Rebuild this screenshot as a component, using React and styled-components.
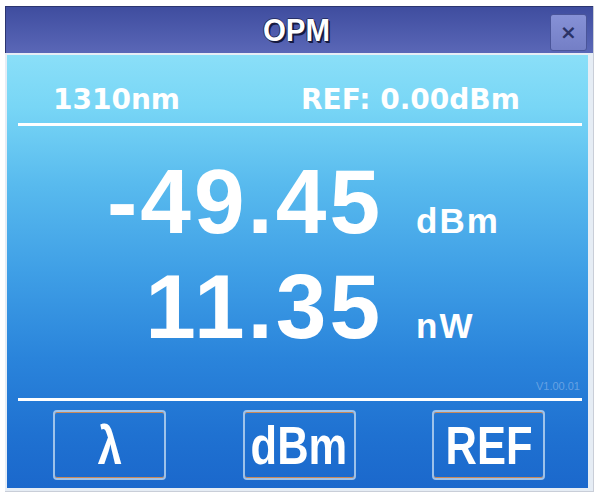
import React from 'react';
import styled, { createGlobalStyle } from 'styled-components';

const Global = createGlobalStyle`
  html, body { margin: 0; padding: 0; background: #ffffff; }
  body { font-family: "Liberation Sans", Arial, sans-serif; }
`;

const Window = styled.div`
  margin: 6px 0 0 5px;
  width: 589px;
  height: 486px;
  box-sizing: border-box;
  display: flex;
  flex-direction: column;
  background: #e6edf5;
  border-right: 1px solid #c9ced8;
  border-bottom: 1px solid #c9ced8;
`;

const TitleBar = styled.div`
  height: 47px;
  box-sizing: border-box;
  display: grid;
  grid-template-columns: 1fr auto 1fr;
  align-items: center;
  padding: 0 6px 0 0;
  background: linear-gradient(#3f4d9f, #5a67b7);
  border-top: 1px solid #2c3570;
  border-left: 1px solid #2c3570;
`;

const Title = styled.div`
  grid-column: 2;
  color: #ffffff;
  font-family: "Liberation Sans", Arial, sans-serif;
  font-weight: bold;
  font-size: 32px;
  line-height: 1;
  transform: scaleX(0.92);
  text-shadow: 1px 1px 0 #151a40, 2px 2px 0 #151a40, -1px 0 0 rgba(20, 25, 60, 0.7),
    0 -1px 0 rgba(20, 25, 60, 0.6);
`;

const CloseButton = styled.div`
  justify-self: end;
  width: 37px;
  height: 37px;
  box-sizing: border-box;
  margin-top: 4px;
  display: flex;
  align-items: center;
  justify-content: center;
  background: linear-gradient(#8691d6, #747fc6);
  border: 1px solid #4a5599;
  border-radius: 3px;
  color: #2b3366;
  font-family: "DejaVu Sans", sans-serif;
  font-weight: bold;
  font-size: 20px;
`;

const Body = styled.div`
  flex: 1;
  margin: 2px 5px 3px 2px;
  padding: 0 6px 0 11px;
  display: flex;
  flex-direction: column;
  background: linear-gradient(
    180deg,
    #8adff8 0%,
    #78d6f6 12%,
    #58baee 30%,
    #3f9fe6 50%,
    #2a84db 70%,
    #1f71d1 88%,
    #1b68cc 100%
  );
`;

const TopRow = styled.div`
  height: 68px;
  box-sizing: border-box;
  display: flex;
  align-items: flex-end;
  padding: 0 0 9px 35px;
`;

const StatusText = styled.span`
  flex: ${(p) => (p.$grow ? '0 0 248px' : '0 0 auto')};
  color: #ffffff;
  font-family: "DejaVu Sans", sans-serif;
  font-weight: bold;
  font-size: 28px;
  line-height: 1;
`;

const Rule = styled.div`
  height: 3px;
  background: #ffffff;
  flex: 0 0 auto;
`;

const Readings = styled.div`
  margin-top: 23px;
  display: grid;
  grid-template-columns: 365px auto;
  column-gap: 33px;
  grid-auto-rows: 105px;
  align-items: baseline;
`;

const Value = styled.span`
  text-align: right;
  color: #ffffff;
  font-family: "Liberation Sans", Arial, sans-serif;
  font-weight: bold;
  font-size: 91px;
  line-height: 105px;
  letter-spacing: 3px;
`;

const Unit = styled.span`
  color: #ffffff;
  font-family: "Liberation Sans", Arial, sans-serif;
  font-weight: bold;
  font-size: 35px;
  letter-spacing: 2px;
`;

const Version = styled.div`
  flex: 1;
  display: flex;
  align-items: flex-end;
  justify-content: flex-end;
  padding: 0 2px 6px 0;
  color: rgba(200, 218, 245, 0.4);
  font-family: "Liberation Sans", Arial, sans-serif;
  font-size: 11px;
`;

const ButtonRow = styled.div`
  display: flex;
  justify-content: space-between;
  padding: 9px 37px 8px 35px;
`;

const SoftKey = styled.div`
  width: 113px;
  height: 70px;
  box-sizing: border-box;
  display: flex;
  align-items: center;
  justify-content: center;
  border: 2px solid rgba(190, 215, 240, 0.8);
  border-radius: 4px;
  box-shadow: inset 0 1px 0 #c98a5a, inset 0 -1px 0 #c98a5a;
`;

const KeyLabel = styled.span`
  display: inline-block;
  color: #ffffff;
  font-family: "Liberation Sans", Arial, sans-serif;
  font-weight: bold;
  font-size: 53px;
  line-height: 1;
  transform: scaleX(0.82);
`;

export default function App() {
  return (
    <>
      <Global />
      <Window>
        <TitleBar>
          <Title>OPM</Title>
          <CloseButton>×</CloseButton>
        </TitleBar>
        <Body>
          <TopRow>
            <StatusText $grow>1310nm</StatusText>
            <StatusText>REF: 0.00dBm</StatusText>
          </TopRow>
          <Rule />
          <Readings>
            <Value>-49.45</Value>
            <Unit>dBm</Unit>
            <Value>11.35</Value>
            <Unit>nW</Unit>
          </Readings>
          <Version>V1.00.01</Version>
          <Rule />
          <ButtonRow>
            <SoftKey><KeyLabel>λ</KeyLabel></SoftKey>
            <SoftKey><KeyLabel>dBm</KeyLabel></SoftKey>
            <SoftKey><KeyLabel>REF</KeyLabel></SoftKey>
          </ButtonRow>
        </Body>
      </Window>
    </>
  );
}
